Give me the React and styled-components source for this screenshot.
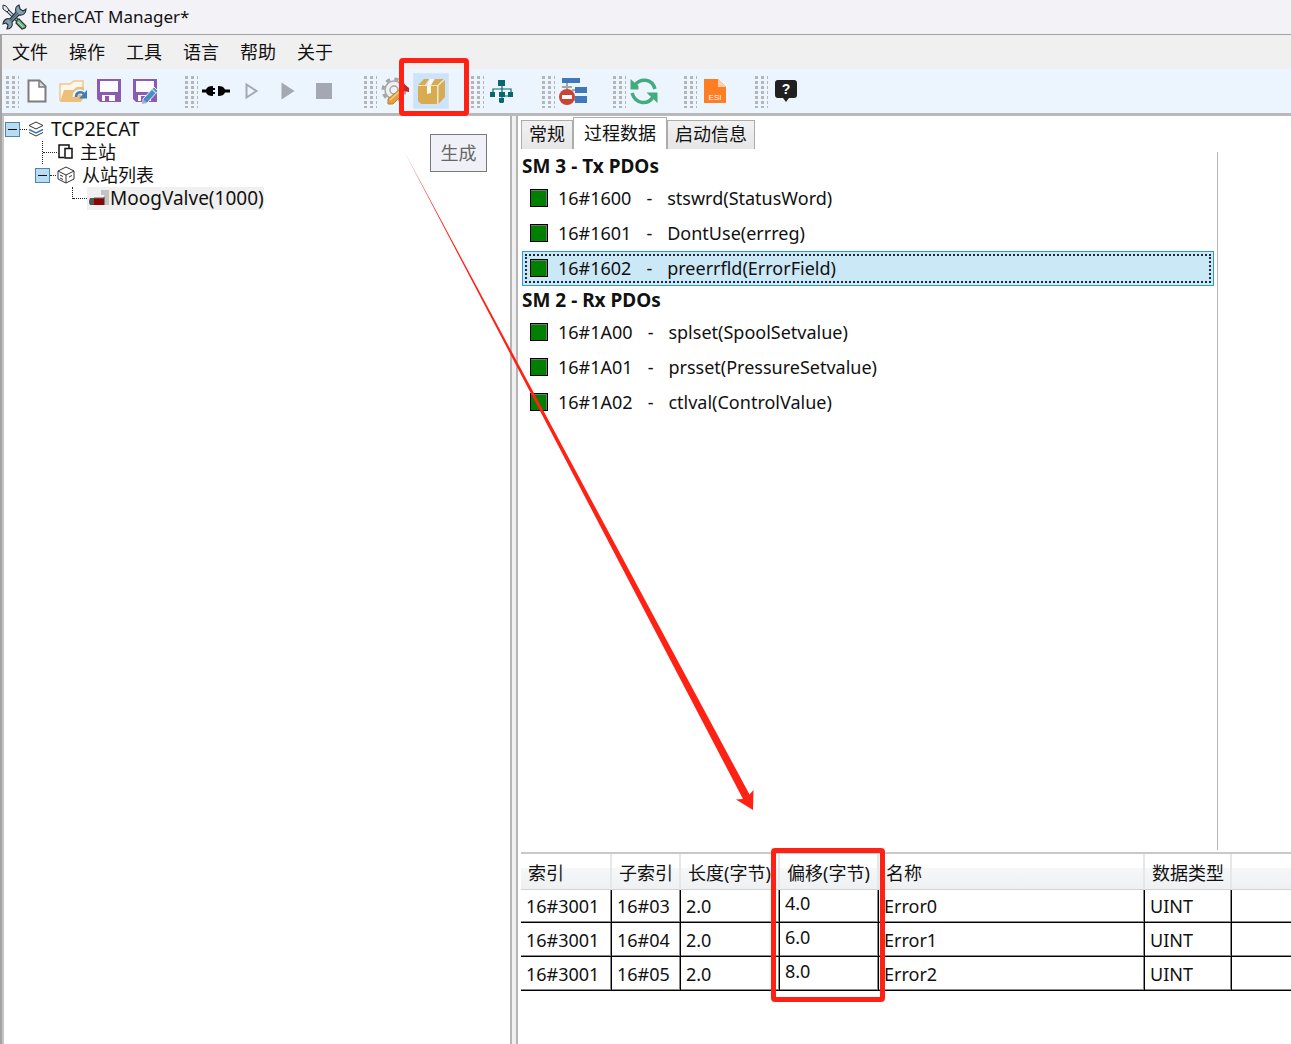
import React from "react"
import styled, { createGlobalStyle, css } from "styled-components"

const GlobalStyle = createGlobalStyle`
  *, *::before, *::after {
    box-sizing: border-box;
  }
  body {
    margin: 0;
    background: #fff;
    color: #111;
    font-family: "Noto Sans", "Noto Sans CJK SC", sans-serif;
    font-size: 18px;
    line-height: 24px;
  }
  button {
    font: inherit;
    color: inherit;
    padding: 0;
    border: 0;
    background: none;
  }
`

const Window = styled.div`
  position: relative;
  display: flex;
  flex-direction: column;
  min-height: 100vh;
  overflow: hidden;
`

const TitleBar = styled.header`
  display: flex;
  align-items: center;
  gap: 4px;
  height: 35px;
  padding-left: 2px;
  background: #f3f2f7;
  border-bottom: 1px solid #a0a0a0;
`

const Title = styled.h1`
  margin: 0;
  font-size: 17px;
  font-weight: 400;
`

const Frame = styled.div`
  flex: 1;
  display: flex;
  flex-direction: column;
  border-left: 2px solid #a3a3a3;
`

const MenuBar = styled.nav`
  display: flex;
  gap: 21px;
  height: 34px;
  padding-left: 10px;
  background: #f0f0f0;
`

const Toolbar = styled.div`
  display: flex;
  align-items: center;
  gap: 21px;
  height: 47px;
  padding-left: 3px;
  background: #ecf4fd;
  border-bottom: 3px solid #b9b9b9;
`

const ToolGroup = styled.div`
  display: flex;
  align-items: center;
`

const Grip = styled.span`
  width: 14px;
  height: 34px;
  background: conic-gradient(at 3px 3px, transparent 75%, #b4b5b7 0) 1px 2px / 6px 5px;
`

const ToolButton = styled.button`
  position: relative;
  display: flex;
  align-items: center;
  justify-content: center;
  width: 36px;
  height: 36px;
  ${props =>
    props.$active &&
    css`
      background: #cce4fb;
      border: 1px solid #dbe6f2;
    `}
`

const Body = styled.main`
  flex: 1;
  display: flex;
`

const Sidebar = styled.aside`
  flex: 0 0 510px;
  display: flex;
  justify-content: space-between;
  align-items: flex-start;
  border-left: 2px solid #c4c4c4;
  border-right: 2px solid #b5b5b5;
`

const Splitter = styled.div`
  flex: 0 0 6px;
  background: #f0f0f0;
  border-right: 2px solid #b5b5b5;
`

const Tree = styled.ul`
  margin: 0;
  padding: 2px 0 0 1px;
  list-style: none;
`

const TreeRow = styled.li`
  display: flex;
  align-items: center;
  height: 23px;
  padding-left: ${props => props.$indent}px;
`

const Expander = styled.button`
  display: flex;
  align-items: center;
  justify-content: center;
  width: 15px;
  height: 15px;
  background: #b9dcf3;
  border: 1px solid #4d86ad;

  &::before {
    content: "";
    width: 9px;
    height: 1px;
    background: #111;
  }
`

const Branch = styled.span`
  width: ${props => props.$width}px;
  border-top: 1px dotted #222;
`

const Elbow = styled.span`
  align-self: stretch;
  width: 15px;
  height: ${props => (props.$through ? 23 : 12)}px;
  border-left: 1px dotted #222;
  display: flex;
  align-items: ${props => (props.$through ? "center" : "flex-end")};

  &::after {
    content: "";
    flex: 1;
    border-top: 1px dotted #222;
  }
`

const TreeLabel = styled.span`
  display: flex;
  align-items: center;
  gap: ${props => props.$gap || 7}px;
  height: 23px;
  padding: 0 0 2px 1px;
  font-size: ${props => (props.$latin ? 19 : 18)}px;
  background: ${props => (props.$selected ? "#f0f0f0" : "none")};
`

const GenerateButton = styled.button`
  width: 57px;
  height: 38px;
  margin: 18px 23px 0 0;
  color: #666;
  background: #f0f1f8;
  border: 1px solid #77797d;
`

const Content = styled.section`
  flex: 1;
  min-width: 0;
  display: flex;
  flex-direction: column;
  padding: 1px 0 53px 3px;
`

const Tabs = styled.div`
  display: flex;
  align-items: flex-end;
  height: 32px;
`

const Tab = styled.button`
  height: ${props => (props.$active ? 32 : 29)}px;
  padding: 0 ${props => (props.$active ? 10 : 7)}px 2px;
  background: ${props => (props.$active ? "#fff" : "linear-gradient(#f1f1f1, #e6e6e6)")};
  border: 1px solid #acacac;
  border-bottom: 0;

  & + & {
    border-left-width: ${props => (props.$active ? 1 : 0)}px;
  }
`

const PdoPanel = styled.div`
  flex: 1;
  margin: 3px 73px 2px 0;
  padding: 0 3px 0 1px;
  border-right: 1px solid #b5b5b5;
`

const PdoHeading = styled.h2`
  margin: 0;
  font-size: 19px;
  line-height: 29px;
  font-weight: 700;
`

const PdoRow = styled.label`
  display: flex;
  align-items: center;
  gap: 15px;
  height: 35px;
  padding: 0 0 2px 7px;
  border: 1px solid ${props => (props.$selected ? "#2f9bd8" : "transparent")};
  background: ${props => (props.$selected ? "#cbe8f6" : "none")};
  outline: ${props => (props.$selected ? "2px dotted #1c2a33" : "none")};
  outline-offset: -5px;
`

const PdoCheck = styled.input`
  appearance: none;
  width: 18px;
  height: 18px;
  margin: 0 -5px 0 0;
  background: #008000;
  border: 1px solid #000;
  box-shadow: inset -1px 1px #777;
`

const TableBox = styled.div`
  position: relative;
  border-top: 2px solid #c9c9c9;
`

const Table = styled.table`
  width: 100%;
  table-layout: fixed;
  border-collapse: separate;
  border-spacing: 0;
`

const HeadCell = styled.th`
  width: ${props => (props.$width ? `${props.$width}px` : "auto")};
  height: 36px;
  padding: 2px 0 0 7px;
  text-align: left;
  font-weight: 400;
  white-space: nowrap;
  background: linear-gradient(#fff 0 40%, #f6f7f8 40%, #eff0f2);
  border-right: 2px solid #e6e7e8;
  border-bottom: 1px solid #d2d2d2;

  &:last-child {
    border-right: 0;
  }
`

const Cell = styled.td`
  height: ${props => (props.$first ? 33 : 34)}px;
  padding: ${props => (props.$raised ? "0 0 6px 5px" : "4px 0 4px 5px")};
  line-height: 24px;
  border-right: 1px solid #000;
  border-bottom: 1px solid #000;
  box-shadow: inset -1px -1px #8a8a8a;

  &:last-child {
    border-right: 0;
    box-shadow: inset 0 -1px #8a8a8a;
  }
`

const Mark = styled.span`
  position: absolute;
  z-index: 2;
  border: 5px solid #ff2113;
  border-radius: 4px;
  pointer-events: none;
`

const ToolMark = styled(Mark)`
  inset: -16px -21px -8px -15px;
`

const ColumnMark = styled(Mark)`
  left: 250px;
  top: -6px;
  bottom: -11px;
  width: 114px;
`

const Arrow = styled.svg`
  position: absolute;
  left: 400px;
  top: 148px;
  z-index: 2;
  pointer-events: none;
`

const ToolsLogo = () => (
  <svg width="25" height="26" viewBox="0 0 25 26">
    <path d="M4 5L17 18" stroke="#26333a" strokeWidth="3.500" />
    <path d="M4 5L16 17" stroke="#d5e4ea" strokeWidth="1.500" />
    <path d="M1 1l3 1 3 4-2 2-4-3z" fill="#e4eef2" stroke="#26333a" />
    <path
      d="M17 1c-3 1-4 4-3 7l-6 7c-3-1-7 1-7 5l3-1 2 2-1 4c4 0 6-3 5-7l7-7c4 1 7-2 7-6l-3 2-3-2z"
      fill="#86a2b2"
      stroke="#26333a"
      strokeWidth="1.200"
    />
    <path d="M8 17L16 9" stroke="#49667a" strokeWidth="1.500" />
    <path d="M15 16l2-1 7 7-1 2-3 1-6-6z" fill="#78b48d" stroke="#24362c" strokeWidth="1.200" />
    <path d="M16 18l5 5" stroke="#bfe0c8" />
  </svg>
)

const NewFile = () => (
  <svg width="20" height="24" viewBox="0 0 20 24">
    <path d="M1.500 1.500H12.500l6 6V22.500H1.500z" fill="#fff" stroke="#7d7d7d" strokeWidth="2" />
    <path d="M12 2v6h6" fill="#ddd" stroke="#7d7d7d" strokeWidth="1.500" />
  </svg>
)

const OpenFile = () => (
  <svg width="28" height="24" viewBox="0 0 28 24">
    <path d="M1 22V5h10l4-3h9v8" fill="#fdf6ea" stroke="#ecc98f" strokeWidth="1.500" />
    <path d="M1 23L5 11h9l4-3h7v10l-3 5z" fill="#ecc07b" />
    <path d="M16 18c0-5 5-7 9-3" fill="none" stroke="#ecf4fd" strokeWidth="5" />
    <path d="M17 18c0-5 5-6 8-3" fill="none" stroke="#3f7db5" strokeWidth="2.500" />
    <path d="M28 11v8.500h-8z" fill="#3f7db5" />
  </svg>
)

const Save = ({ edit }) => (
  <svg width="26" height="28" viewBox="0 0 26 28">
    <path d="M1 2h24v23H4l-3-3z" fill="#8a5bb0" />
    <path d="M4 4h18v11H4z" fill="#fbfaff" />
    <path d="M6 18h13v6H6z" fill="#fbfaff" />
    <path d="M9 19h4v5H9z" fill="#8a5bb0" />
    {edit && (
      <>
        <path d="M11 22L22 10l4 4-11 12h-4z" fill="#4c8cc4" stroke="#ecf4fd" />
        <path d="M10 27l1-5 4 4z" fill="#9fb2c2" />
        <path d="M20 12l4 4" stroke="#b9d4e8" strokeWidth="1.500" />
      </>
    )}
  </svg>
)

const Connect = () => (
  <svg width="28" height="12" viewBox="0 0 28 12">
    <path d="M0 4.500h4C5 2 7 1 11 1v2h2v2h-2v2h2v2h-2v2C7 11 5 10 4 7.500H0z" fill="#000" />
    <path d="M16 1c4 0 6 1 7 3.500h5v3h-5C22 10 20 11 16 11z" fill="#000" />
  </svg>
)

const Play = ({ hollow }) => (
  <svg width="14" height="18" viewBox="0 0 14 18">
    {hollow ? (
      <path d="M1.500 2.500v13L11.500 9z" fill="none" stroke="#a4a8b0" strokeWidth="2" />
    ) : (
      <path d="M0.500 0.500v17L13.500 9z" fill="#a4a8b0" />
    )}
  </svg>
)

const Stop = () => (
  <svg width="16" height="16" viewBox="0 0 16 16">
    <path d="M0 0h16v16H0z" fill="#a4a8b0" />
  </svg>
)

const Configure = () => (
  <svg width="28" height="28" viewBox="0 0 28 28">
    <circle cx="13" cy="13" r="11" fill="none" stroke="#a5a5a5" strokeWidth="3" strokeDasharray="4.320 4.320" />
    <circle cx="13" cy="13" r="9" fill="#eef0f2" stroke="#a5a5a5" strokeWidth="1.500" />
    <circle cx="13" cy="13" r="4" fill="#ecf4fd" stroke="#a5a5a5" strokeWidth="1.500" />
    <path d="M7 22L19 12l4 4-11 11H7z" fill="#e3a23f" stroke="#bb7f27" />
    <path d="M9 23L20 13" stroke="#f7cf86" strokeWidth="1.500" />
    <path d="M19 8l3-2 6 5v4l-5-1z" fill="#c9242b" />
  </svg>
)

const Package = () => (
  <svg width="28" height="28" viewBox="0 0 28 28">
    <path d="M1 9h19v18H4l-3-3z" fill="#d9ab4f" />
    <path d="M21.500 9L28 3v17l-6.500 7z" fill="#d9ab4f" />
    <path d="M1 8l6-6h5L8 8zM14 8l4-6h9l-6 6z" fill="#d9ab4f" />
    <path d="M13 2h4l-3 6v8l-4 1V8z" fill="#fffaf0" />
    <path d="M1 8.500h19.500L27 2.500M20.700 8.500V27" fill="none" stroke="#f9e7bf" />
  </svg>
)

const Network = () => (
  <svg width="24" height="24" viewBox="0 0 24 24">
    <path d="M12 6v13M3 14v-4h18v4M21 14v3h-8" fill="none" stroke="#08696c" strokeWidth="1.200" />
    <path d="M8 1h7v6H8zM0 13h5v5H0zM9 13h6v5H9zM18 13h5v5h-5zM9 19h5v4l-1 1h-3l-1-1z" fill="#08696c" />
  </svg>
)

const Disconnect = () => (
  <svg width="28" height="28" viewBox="0 0 28 28">
    <path d="M3 1h18v5H3zM16 10h12v6H16zM16 19h12v7H16z" fill="#4079bb" />
    <path d="M8 6v6M3 10h10M13 13h3M13 23h3" stroke="#a6a6a6" strokeWidth="2" />
    <circle cx="8" cy="20" r="8" fill="#cb4433" />
    <path d="M3 18h10v4H3z" fill="#fff" />
  </svg>
)

const Refresh = () => (
  <svg width="28" height="28" viewBox="0 0 28 28">
    <path d="M5 8c5-7 17-7 20 4M23 20C18 28 6 28 2 16" fill="none" stroke="#43ac7f" strokeWidth="3.500" />
    <path d="M0.500 2v10.500h8V9L5 6zM27.500 26V15.500h-11l3 3z" fill="#43ac7f" />
  </svg>
)

const Esi = () => (
  <svg width="22" height="24" viewBox="0 0 22 24">
    <path d="M0 0h14l8 8v16H0z" fill="#ff7d23" />
    <path d="M14 0l8 8h-8z" fill="#ffd0a8" />
    <text x="11" y="21" textAnchor="middle" fontSize="8" fontFamily="Liberation Sans, sans-serif" fill="#fff">
      ESI
    </text>
  </svg>
)

const Help = () => (
  <svg width="22" height="22" viewBox="0 0 22 22">
    <path d="M3 0h16q3 0 3 3v12q0 3-3 3h-5l-3 4-3-4H3q-3 0-3-3V3q0-3 3-3z" fill="#202020" />
    <text
      x="11"
      y="14"
      textAnchor="middle"
      fontSize="14"
      fontWeight="700"
      fontFamily="Liberation Sans, sans-serif"
      fill="#fff"
    >
      ?
    </text>
  </svg>
)

const Layers = () => (
  <svg width="16" height="16" viewBox="0 0 16 16" fill="none" strokeWidth="1">
    <path d="M1 8.500l7 3.500 7-3.500" stroke="#3979b5" strokeWidth="1.500" />
    <path d="M1 4.500L8 1l7 3.500L8 8zM1 11.500L8 15l7-3.500" stroke="#333" />
  </svg>
)

const Master = () => (
  <svg width="15" height="15" viewBox="0 0 15 15" fill="none" stroke="#111" strokeWidth="1.500">
    <path d="M6 13.500H1V1h10v3" />
    <path d="M7 4.500h7v9.500H7z" fill="#fff" />
  </svg>
)

const Cube = () => (
  <svg width="18" height="18" viewBox="0 0 18 18" fill="none" stroke="#333">
    <path d="M9 1l8 4v8l-8 4-8-4V5zM1 5l8 4 8-4M9 9v8" />
    <path d="M3 9l3 1.500M3 12l3 1.500M12 11l3-1.500" />
  </svg>
)

const Valve = () => (
  <svg width="21" height="18" viewBox="0 0 21 18">
    <path d="M13 1h8v15h-5V6h-3z" fill="#c3c3c3" />
    <path d="M2 9h5v7H2q-2-3 0-7z" fill="#555" />
    <path d="M6 9h10v7H6z" fill="#8b0505" />
    <path d="M16 8v8" stroke="#333" />
    <path d="M6 9h10" stroke="#666" />
  </svg>
)

const menus = ["文件", "操作", "工具", "语言", "帮助", "关于"]

const toolGroups = [
  [
    { label: "新建", icon: <NewFile /> },
    { label: "打开", icon: <OpenFile /> },
    { label: "保存", icon: <Save /> },
    { label: "另存为", icon: <Save edit /> },
  ],
  [
    { label: "连接", icon: <Connect /> },
    { label: "单步", icon: <Play hollow /> },
    { label: "运行", icon: <Play /> },
    { label: "停止", icon: <Stop /> },
  ],
  [
    { label: "配置", icon: <Configure /> },
    { label: "打包", icon: <Package />, active: true },
  ],
  [{ label: "拓扑", icon: <Network /> }],
  [{ label: "断开", icon: <Disconnect /> }],
  [{ label: "刷新", icon: <Refresh /> }],
  [{ label: "ESI", icon: <Esi /> }],
  [{ label: "帮助", icon: <Help /> }],
]

const tabs = ["常规", "过程数据", "启动信息"]

const pdoGroups = [
  {
    title: "SM 3 - Tx PDOs",
    items: [
      { index: "16#1600", name: "stswrd(StatusWord)" },
      { index: "16#1601", name: "DontUse(errreg)" },
      { index: "16#1602", name: "preerrfld(ErrorField)", selected: true },
    ],
  },
  {
    title: "SM 2 - Rx PDOs",
    items: [
      { index: "16#1A00", name: "splset(SpoolSetvalue)" },
      { index: "16#1A01", name: "prsset(PressureSetvalue)" },
      { index: "16#1A02", name: "ctlval(ControlValue)" },
    ],
  },
]

const columns = [
  { title: "索引", width: 91 },
  { title: "子索引", width: 69 },
  { title: "长度(字节)", width: 99 },
  { title: "偏移(字节)", width: 99 },
  { title: "名称", width: 266 },
  { title: "数据类型", width: 87 },
  { title: "" },
]

const entries = [
  ["16#3001", "16#03", "2.0", "4.0", "Error0", "UINT", ""],
  ["16#3001", "16#04", "2.0", "6.0", "Error1", "UINT", ""],
  ["16#3001", "16#05", "2.0", "8.0", "Error2", "UINT", ""],
]

const App = () => {
  return (
    <Window>
      <GlobalStyle />
      <TitleBar>
        <ToolsLogo />
        <Title>EtherCAT Manager*</Title>
      </TitleBar>
      <Frame>
        <MenuBar>
          {menus.map(menu => (
            <button key={menu}>{menu}</button>
          ))}
        </MenuBar>
        <Toolbar>
          {toolGroups.map((group, index) => (
            <ToolGroup key={index}>
              <Grip />
              {group.map(tool => (
                <ToolButton key={tool.label} aria-label={tool.label} $active={tool.active}>
                  {tool.icon}
                  {tool.active && <ToolMark />}
                </ToolButton>
              ))}
            </ToolGroup>
          ))}
        </Toolbar>
        <Body>
          <Sidebar>
            <Tree>
              <TreeRow $indent={0}>
                <Expander aria-label="TCP2ECAT" />
                <Branch $width={7} />
                <TreeLabel $latin>
                  <Layers />
                  TCP2ECAT
                </TreeLabel>
              </TreeRow>
              <TreeRow $indent={37}>
                <Elbow $through />
                <TreeLabel>
                  <Master />
                  主站
                </TreeLabel>
              </TreeRow>
              <TreeRow $indent={30}>
                <Expander aria-label="从站列表" />
                <Branch $width={6} />
                <TreeLabel>
                  <Cube />
                  从站列表
                </TreeLabel>
              </TreeRow>
              <TreeRow $indent={67}>
                <Elbow />
                <TreeLabel $latin $selected $gap={1}>
                  <Valve />
                  MoogValve(1000)
                </TreeLabel>
              </TreeRow>
            </Tree>
            <GenerateButton>生成</GenerateButton>
          </Sidebar>
          <Splitter />
          <Content>
            <Tabs role="tablist">
              {tabs.map((tab, index) => (
                <Tab key={tab} role="tab" aria-selected={index === 1} $active={index === 1}>
                  {tab}
                </Tab>
              ))}
            </Tabs>
            <PdoPanel>
              {pdoGroups.map(group => (
                <div key={group.title}>
                  <PdoHeading>{group.title}</PdoHeading>
                  {group.items.map(item => (
                    <PdoRow key={item.index} $selected={item.selected}>
                      <PdoCheck type="checkbox" defaultChecked />
                      <span>{item.index}</span>
                      <span>-</span>
                      <span>{item.name}</span>
                    </PdoRow>
                  ))}
                </div>
              ))}
            </PdoPanel>
            <TableBox>
              <Table>
                <thead>
                  <tr>
                    {columns.map(column => (
                      <HeadCell key={column.title} $width={column.width}>
                        {column.title}
                      </HeadCell>
                    ))}
                  </tr>
                </thead>
                <tbody>
                  {entries.map((entry, row) => (
                    <tr key={row}>
                      {entry.map((value, col) => (
                        <Cell key={col} $first={row === 0} $raised={col === 3}>
                          {value}
                        </Cell>
                      ))}
                    </tr>
                  ))}
                </tbody>
              </Table>
              <ColumnMark />
            </TableBox>
          </Content>
        </Body>
      </Frame>
      <Arrow width="360" height="666" viewBox="0 0 360 666">
        <path d="M4 3L349.500 646.500l4-4.500L353 662 336 651.500l7-.5z" fill="#ff2113" />
      </Arrow>
    </Window>
  )
}

export default App
